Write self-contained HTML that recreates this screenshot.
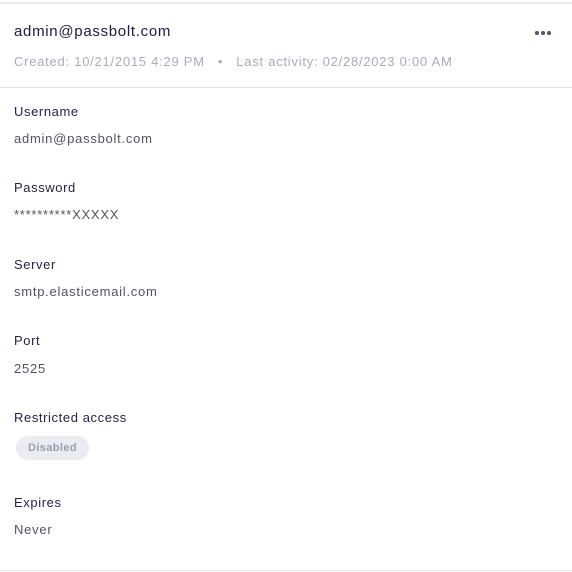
<!DOCTYPE html>
<html><head><style>
body{margin:0;width:572px;height:572px;background:#fff;font-family:"Liberation Sans",sans-serif;position:relative;overflow:hidden}
.a{position:absolute;left:14px;white-space:nowrap;line-height:16px}
.t{font-size:15px;color:#1c1d3a;letter-spacing:0.7px}
.m{font-size:13px;color:#a6acbb;letter-spacing:0.75px}
.l{font-size:13px;color:#23244a;letter-spacing:0.6px}
.v{font-size:13px;color:#52535f;letter-spacing:0.75px}
.hr{position:absolute;left:0;width:572px;height:1px;background:#e3e5ec}
</style></head><body>
<div class="hr" style="top:2px;height:2px;background:#e8eaf0"></div>
<div class="a t" style="top:24px">admin@passbolt.com</div>
<div style="position:absolute;left:535px;top:31px;width:16px;height:4px">
<span style="position:absolute;left:0;top:0;width:3.5px;height:3.5px;border-radius:50%;background:#54566a"></span>
<span style="position:absolute;left:6px;top:0;width:3.5px;height:3.5px;border-radius:50%;background:#54566a"></span>
<span style="position:absolute;left:12px;top:0;width:3.5px;height:3.5px;border-radius:50%;background:#54566a"></span>
</div>
<div class="a m" style="top:54px">Created: 10/21/2015 4:29 PM &nbsp;&nbsp;•&nbsp;&nbsp; Last activity: 02/28/2023 0:00 AM</div>
<div class="hr" style="top:87px"></div>
<div class="a l" style="top:104px">Username</div>
<div class="a v" style="top:131px">admin@passbolt.com</div>
<div class="a l" style="top:180px">Password</div>
<div class="a v" style="top:207px">**********XXXXX</div>
<div class="a l" style="top:257px">Server</div>
<div class="a v" style="top:284px">smtp.elasticemail.com</div>
<div class="a l" style="top:333px">Port</div>
<div class="a v" style="top:361px">2525</div>
<div class="a l" style="top:410px">Restricted access</div>
<div style="position:absolute;left:16px;top:436px;width:73px;height:24px;border-radius:12px;background:#e9ecf3;color:#9a9fae;font-size:11px;font-weight:bold;line-height:24px;text-align:center;letter-spacing:0.4px">Disabled</div>
<div class="a l" style="top:495px">Expires</div>
<div class="a v" style="top:522px">Never</div>
<div class="hr" style="top:570px"></div>
</body></html>
